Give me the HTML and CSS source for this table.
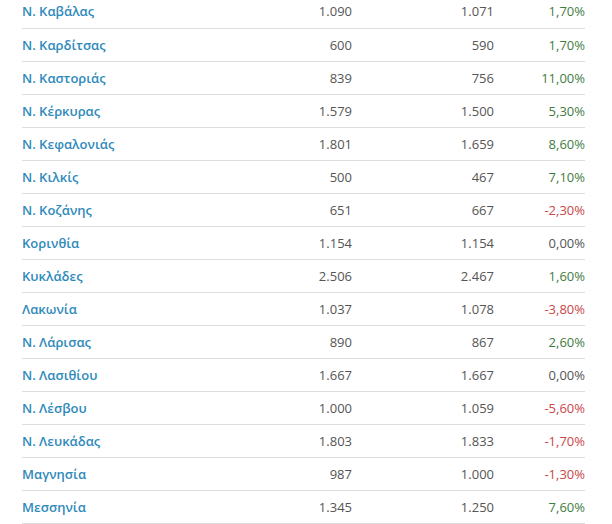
FILE: index.html
```html
<!DOCTYPE html>
<html lang="el">
  <head>
    <meta charset="UTF-8" />
    <title>Πίνακας νομών</title>
    <link rel="stylesheet" href="styles.css">
  </head>
  <body>
    <table class="stats">
      <colgroup>
        <col class="col-name" />
        <col class="col-prev" />
        <col class="col-cur" />
        <col class="col-diff" />
      </colgroup>
      <tbody>
        <tr><td class="name">Ν. Καβάλας</td><td>1.090</td><td>1.071</td><td class="up">1,70%</td></tr>
        <tr><td class="name">Ν. Καρδίτσας</td><td>600</td><td>590</td><td class="up">1,70%</td></tr>
        <tr><td class="name">Ν. Καστοριάς</td><td>839</td><td>756</td><td class="up">11,00%</td></tr>
        <tr><td class="name">Ν. Κέρκυρας</td><td>1.579</td><td>1.500</td><td class="up">5,30%</td></tr>
        <tr><td class="name">Ν. Κεφαλονιάς</td><td>1.801</td><td>1.659</td><td class="up">8,60%</td></tr>
        <tr><td class="name">Ν. Κιλκίς</td><td>500</td><td>467</td><td class="up">7,10%</td></tr>
        <tr><td class="name">Ν. Κοζάνης</td><td>651</td><td>667</td><td class="down">-2,30%</td></tr>
        <tr><td class="name">Κορινθία</td><td>1.154</td><td>1.154</td><td class="flat">0,00%</td></tr>
        <tr><td class="name">Κυκλάδες</td><td>2.506</td><td>2.467</td><td class="up">1,60%</td></tr>
        <tr><td class="name">Λακωνία</td><td>1.037</td><td>1.078</td><td class="down">-3,80%</td></tr>
        <tr><td class="name">Ν. Λάρισας</td><td>890</td><td>867</td><td class="up">2,60%</td></tr>
        <tr><td class="name">Ν. Λασιθίου</td><td>1.667</td><td>1.667</td><td class="flat">0,00%</td></tr>
        <tr><td class="name">Ν. Λέσβου</td><td>1.000</td><td>1.059</td><td class="down">-5,60%</td></tr>
        <tr><td class="name">Ν. Λευκάδας</td><td>1.803</td><td>1.833</td><td class="down">-1,70%</td></tr>
        <tr><td class="name">Μαγνησία</td><td>987</td><td>1.000</td><td class="down">-1,30%</td></tr>
        <tr><td class="name">Μεσσηνία</td><td>1.345</td><td>1.250</td><td class="up">7,60%</td></tr>
      </tbody>
    </table>
  </body>
</html>
```

FILE: styles.css
```css
* {
  margin: 0;
  padding: 0;
  box-sizing: border-box;
  font-family: "Open Sans", sans-serif;
}

body {
  background: #fff;
  padding-left: 22px;
}

.stats {
  width: 563px;
  margin-top: -5px;
  border-collapse: collapse;
  table-layout: fixed;
  font-size: 13px;
  color: #555;
}

.col-name { width: 220px; }
.col-prev { width: 110px; }
.col-cur { width: 142px; }
.col-diff { width: 91px; }

.stats td {
  height: 33px;
  padding: 0;
  text-align: right;
  vertical-align: middle;
  border-bottom: 1px solid #dedede;
}

.stats td.name {
  text-align: left;
  font-weight: 600;
  color: #2f8abb;
}

.up {
  color: #3f7d3f;
}

.down {
  color: #c9474a;
}

.flat {
  color: #555;
}
```
